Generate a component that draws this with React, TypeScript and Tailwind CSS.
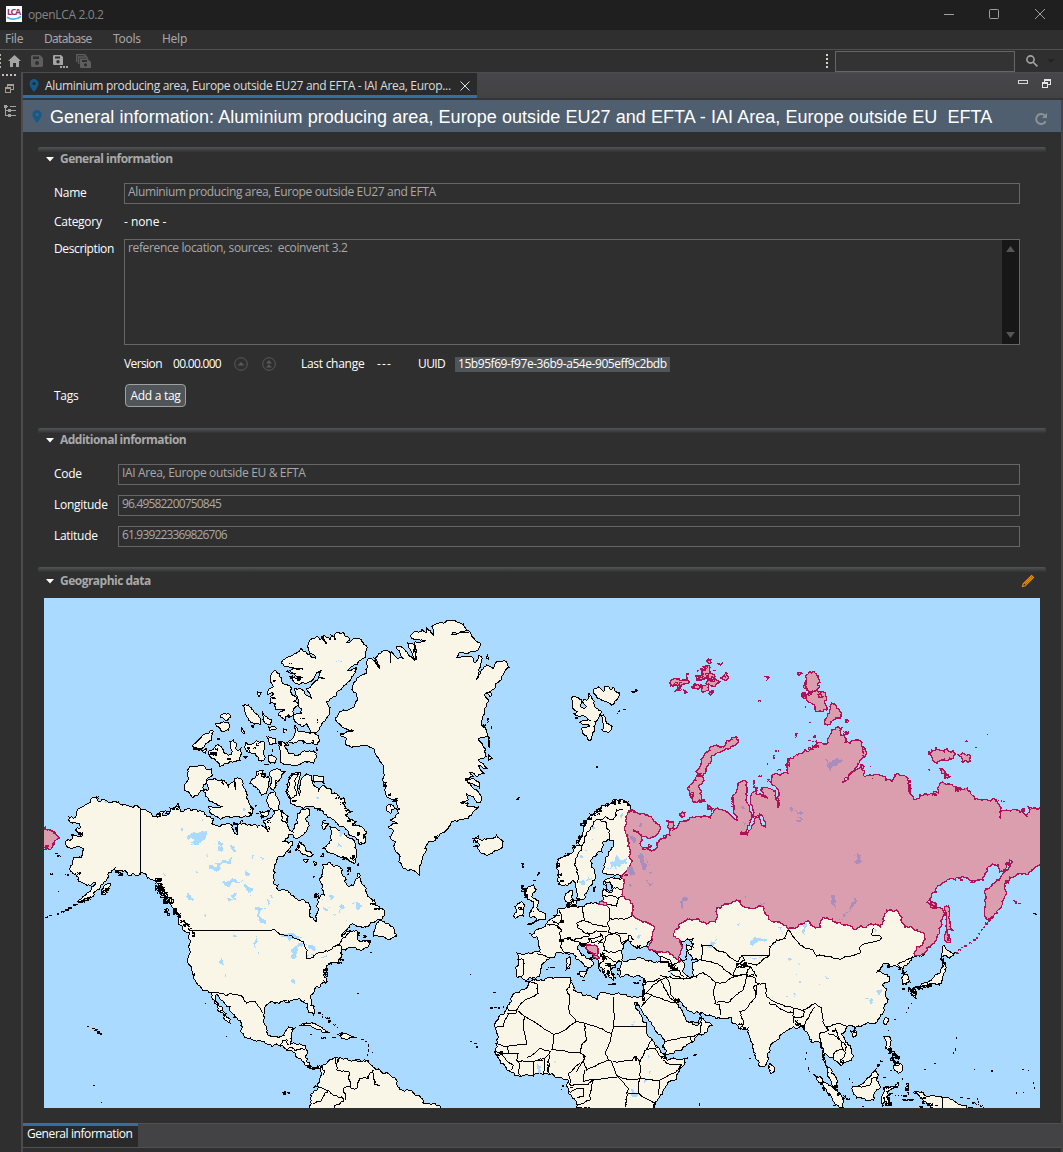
import React from "react";

type Origin = [number, number, number];

/* Coordinate frames: x offset, y offset, units per pixel. */
const PAGE: Origin = [0, 0, 1];
const NW: Origin = [40, 560, 3];
const SW: Origin = [40, 840, 3];
const GL: Origin = [330, 600, 3];
const EU: Origin = [470, 780, 3];
const NE: Origin = [660, 560, 3];
const SE: Origin = [660, 830, 3];
const AF: Origin = [470, 930, 3];

/* Stable value in [-0.5, 0.5) for a segment, so shared coastlines stay identical. */
const noise = (a: number, b: number, c = 0, d = 0) => {
  const v = Math.sin(a * 12.9898 + b * 78.233 + c * 37.719 + d * 9.131) * 43758.5453;
  return v - Math.floor(v) - 0.5;
};

/* Turns a list of points into a path, adding small coastline irregularities. */
function trace([ox, oy, k]: Origin, src: string, closed = true, rough = 0.3) {
  let p = src.trim().split(/\s+/).map((q) => {
    const [x, y] = q.split(",").map(Number);
    return [ox + x / k, oy + y / k];
  });
  if (closed) p.push(p[0]);
  for (let level = 0; level < 3; level++) {
    const out = [p[0]];
    for (let i = 1; i < p.length; i++) {
      const [x0, y0] = p[i - 1];
      const [x1, y1] = p[i];
      const len = Math.hypot(x1 - x0, y1 - y0);
      const straight = rough === 0 || (x0 === x1 && (x0 === 1040 || len > 40)) || (y0 === y1 && len > 25);
      if (len > 2 && !straight) {
        const d = noise(x0, y0, x1, y1) * Math.min(len, 8) * rough * 1.4;
        out.push([(x0 + x1) / 2 - ((y1 - y0) / len) * d, (y0 + y1) / 2 + ((x1 - x0) / len) * d]);
      }
      out.push([x1, y1]);
    }
    p = out;
  }
  return "M" + p.map(([x, y]) => x.toFixed(1) + " " + y.toFixed(1)).join("L") + (closed ? "Z" : "");
}

const many = (o: Origin, list: string[], closed = true, rough = 0.3) =>
  list.map((s) => trace(o, s, closed, rough)).join("");

/* Islets, given as x,y,width,height; larger ones are broken up into loose pixels. */
const specks = ([ox, oy, k]: Origin, src: string) =>
  src.trim().split(/\s+/).map((q) => {
    const [x, y, w, h] = q.split(",").map(Number);
    const px = Math.round(ox + x / k);
    const py = Math.round(oy + y / k);
    if (w * h <= 3) return `M${px} ${py}h${w}v${h}h-${w}z`;
    let out = "";
    for (let j = 0; j < h; j++)
      for (let i = 0; i < w; i++)
        if (noise(px + i, py + j) < 0.26) out += `M${px + i} ${py + j}h1v1h-1z`;
    return out;
  }).join("");

const AMERICA =
  "96,797 98,801 103,799 111,802 120,804 130,807 140,808 147,811 152,815 157,817 160,812 166,810 162,815 170,812 170,808 175,808 178,803 179,808 182,812 188,808 191,811 198,812 206,815 213,818 215,825 225,825 233,825 237,835 238,825 253,825 262,825 266,829 268,832 264,820 270,819 275,811 280,810 281,820 288,817 287,826 293,832 298,823 298,813 301,810 308,808 309,814 306,818 309,823 306,832 298,838 289,834 284,841 293,842 288,850 278,857 277,861 273,870 273,882 278,885 278,890 290,893 300,900 308,902 309,912 313,918 316,922 318,913 317,900 324,895 323,885 319,880 322,865 330,862 335,866 340,867 342,874 345,877 345,882 347,885 350,886 355,883 357,874 358,873 363,885 367,894 370,898 375,904 380,908 384,910 384,916 377,920 370,924 350,925 342,937 348,932 357,931 357,937 360,942 368,940 370,943 357,950 355,947 342,950 340,953 342,957 339,961 333,962 327,968 324,972 326,983 320,987 311,995 311,999 315,1010 313,1016 308,1012 307,1003 304,1001 300,999 287,1002 281,1001 273,1002 265,1007 264,1014 264,1023 268,1035 272,1037 278,1038 285,1036 285,1032 287,1029 295,1028 292,1040 290,1045 305,1045 305,1057 307,1062 312,1067 322,1067 327,1063 333,1058 337,1057 337,1063 340,1057 347,1058 357,1061 367,1060 373,1067 380,1070 390,1075 397,1085 408,1090 418,1095 426,1104 440,1106 443,1112 311,1112 311,1103 313,1093 319,1087 322,1075 320,1068 317,1068 312,1069 305,1065 298,1058 295,1053 288,1051 278,1045 267,1044 253,1040 242,1033 242,1023 238,1020 232,1013 217,994 216,997 222,1007 224,1012 230,1019 230,1023 225,1020 223,1013 217,1010 214,1000 209,992 198,985 195,980 193,973 188,963 188,947 190,940 188,932 186,932 178,922 176,911 173,908 170,898 162,890 157,883 153,880 147,876 143,873 139,875 132,874 128,875 120,870 117,873 115,868 112,870 104,882 96,891 88,899 77,902 87,893 91,888 95,882 92,884 83,883 78,877 72,872 70,866 73,862 73,858 83,855 83,848 75,848 70,848 65,842 72,839 75,835 83,835 75,830 80,828 75,822 68,820 69,817 77,815 80,808 84,806 90,801";

const OLD_WORLD =
  "630,805 626,802 623,800 618,801 613,800 610,804 605,805 600,808 595,812 590,814 587,820 586,825 582,833 580,845 570,853 563,857 557,863 557,869 559,874 557,880 563,886 568,885 573,880 576,883 578,900 582,899 585,898 587,892 589,887 593,880 596,877 591,867 591,860 593,857 598,852 602,852 603,842 608,839 613,840 613,847 608,852 605,858 603,873 610,875 617,874 621,877 607,879 603,883 607,886 612,885 612,892 608,892 603,888 602,894 603,900 598,904 592,903 583,906 570,907 567,902 567,893 572,890 570,903 565,908 560,908 557,914 553,918 547,923 544,927 538,930 529,933 532,936 538,938 540,947 540,952 517,953 517,977 525,980 531,978 537,977 542,967 550,958 556,953 562,953 570,953 576,959 587,967 587,973 589,967 593,965 585,956 580,952 578,946 580,943 585,947 592,954 598,960 600,967 603,973 606,978 608,972 613,980 610,967 618,962 622,962 620,970 620,977 630,976 643,978 645,980 642,997 633,997 627,996 613,995 610,994 600,993 598,999 597,1000 585,996 577,992 573,990 573,985 570,977 562,978 550,978 538,981 528,982 523,990 515,993 511,1002 507,1007 500,1015 495,1027 496,1040 495,1053 500,1062 507,1070 520,1077 535,1074 545,1073 552,1073 558,1078 568,1080 568,1093 577,1103 577,1112 653,1112 655,1102 665,1088 677,1077 684,1065 688,1057 676,1059 667,1060 660,1050 655,1045 647,1030 642,1017 635,1002 640,1008 652,1025 665,1043 665,1055 678,1050 690,1043 704,1034 712,1025 702,1018 700,1023 695,1025 687,1022 683,1013 678,1000 683,1004 690,1012 703,1013 712,1016 730,1017 736,1024 742,1029 748,1028 750,1038 752,1047 757,1060 762,1067 768,1060 770,1047 780,1038 790,1028 803,1025 807,1032 812,1043 820,1042 823,1057 827,1070 837,1088 837,1078 828,1067 825,1053 833,1057 842,1065 853,1057 852,1050 848,1043 843,1036 842,1033 847,1027 860,1027 877,1022 884,1011 888,1002 886,993 882,985 890,977 877,972 880,968 887,963 893,966 900,967 903,976 902,985 910,982 908,976 903,970 909,963 913,957 917,956 925,953 932,944 940,933 942,925 943,910 932,906 927,902 936,892 947,880 955,880 967,878 975,882 983,880 985,874 988,867 992,864 998,865 1000,872 1005,869 1010,860 1013,862 1008,870 1002,875 997,880 990,887 985,893 985,907 987,920 994,915 1002,905 1005,896 1005,887 1006,882 1010,877 1020,873 1027,875 1033,870 1040,865 1044,865 1044,808 1034,808 1028,807 1027,817 1023,812 1017,810 1000,812 998,803 995,799 986,799 975,799 972,795 967,788 957,787 943,782 938,787 938,793 930,794 920,795 916,800 910,793 908,778 897,773 892,782 886,780 880,775 865,777 862,765 855,771 842,783 850,775 857,767 865,757 865,750 862,742 857,740 850,743 845,742 846,738 841,735 842,728 837,727 832,730 829,737 828,743 822,743 813,748 805,750 798,755 788,760 787,767 788,773 772,775 772,785 779,793 778,807 776,797 773,790 767,787 760,790 767,798 758,795 756,791 752,793 752,805 752,817 760,814 763,817 765,827 759,817 755,818 750,830 747,835 740,833 746,832 750,820 749,805 747,790 747,783 743,780 738,783 736,793 732,800 734,809 737,820 726,812 717,808 713,813 710,818 704,816 693,817 684,821 673,830 672,822 668,820 670,835 660,839 657,843 655,850 643,848 640,835 633,830 642,836 652,837 660,830 657,824 652,818 642,813 633,810";

const RUSSIA =
  "628,812 625,820 625,827 628,840 630,852 632,860 629,868 622,875 622,895 626,900 633,905 632,915 640,920 647,923 655,928 652,936 648,947 660,952 673,955 678,960 680,955 682,945 676,938 675,930 681,923 687,919 692,920 697,919 701,922 710,922 715,922 717,908 727,904 740,901 744,907 752,909 760,906 765,913 770,920 776,921 788,929 796,928 805,922 812,925 820,927 823,917 832,919 843,925 857,929 867,926 880,927 883,918 887,910 898,911 902,918 905,927 914,930 925,935 923,943 917,947 915,956 " +
  OLD_WORLD.slice(OLD_WORLD.indexOf("925,953"));

const CANADA = many(NW, [
  "725,305 745,290 760,285 780,265 800,280 828,297 808,280 805,265 805,250 830,230 840,240 850,228 858,252 848,228 870,240 873,225 885,240 885,222 910,218 930,235 920,248 945,235 965,240 982,262 978,290 950,315 920,332 950,322 935,350 905,385 885,410 860,425 870,450 860,475 840,500 830,517 810,517 800,490 785,500 765,485 760,465 785,460 775,435 765,385 785,388 815,415 800,385 835,355 850,355 835,350 845,330 800,370 775,372 750,350 785,352 740,335 762,325 790,328 735,320",
  "705,330 720,340 735,375 755,385 750,395 770,415 760,425 778,435 760,450 755,470 745,465 735,482 715,465 735,450 705,445 705,430 690,430 690,420 700,400 682,405 685,390 700,380 690,360",
  "765,495 775,515 785,515 810,520 830,525 840,540 830,555 815,548 800,550 785,540 765,548 745,545 760,530",
  "715,545 735,550 745,580 770,587 790,575 820,572 830,590 820,610 795,605 780,615 735,612 720,605 720,570",
  "460,618 485,615 500,628 515,625 520,645 500,660 490,690 475,705 458,713 445,695 433,690 445,655 442,630",
  "525,655 545,660 550,675 545,660 565,680 580,665 585,690 585,655 600,655 610,680 620,715 640,745 635,765 600,772 590,768 540,778 510,758 505,740 550,738 510,725 495,708 490,690 505,690 500,670",
  "630,670 645,655 650,635 670,632 665,650 685,650 680,700 665,705 655,688 645,680",
  "690,635 715,628 735,635 720,658 705,672 700,690 690,680",
  "690,700 705,695 718,725 715,750 700,755 685,740 683,710",
  "745,660 755,640 780,637 778,655 772,690 778,705 785,655 800,642 815,650 820,675 835,695 850,675 870,685 875,700 890,700 900,720 915,715 915,745 935,755 915,765 925,775 950,785 940,795 965,800 980,815 970,825 978,840 960,853 945,830 925,820 900,800 875,775 850,755 825,745 790,745 750,725 740,700",
  "745,665 755,642 775,640 765,665 770,705 750,715 742,690",
  "870,800 890,805 905,815 935,835 950,870 945,910 920,895 880,880 850,865 875,840",
  "505,575 530,555 545,560 555,580 575,585 570,545 580,538 590,570 603,565 600,600 570,605 540,620 532,605 510,590",
  "458,555 490,525 518,510 515,540 495,555 480,570 460,568",
  "540,470 565,460 572,472 555,480", "527,490 565,488 565,510 550,515",
  "605,435 625,435 655,465 660,495 640,490 620,470 615,455", "668,458 695,480 690,495 675,490",
  "685,500 710,505 690,512", "602,500 612,520 605,515", "653,395 664,398 659,410 654,405",
  "618,545 628,555 648,542 672,545 672,600 655,600 645,580 620,575", "683,585 705,590 705,610 690,610",
  "680,530 705,535 708,550 690,555", "820,645 850,650 852,670 820,665", "730,505 740,510 732,518",
  "487,575 500,565 497,580", "660,755 690,750 680,770 665,775", "848,785 865,790 850,808", "720,750 745,770 740,790 725,780",
  "632,498 642,495 640,502", "612,590 620,590 616,598",
]);

const SMALL_WEST = many(SW, [
  "765,30 780,5 800,35 820,45 790,45", "790,60 805,58 798,68", "820,65 830,70 825,78", "1000,290 1005,260 1020,240 1035,250 1060,262 1070,290 1050,300 1030,290",
  "780,557 800,548 830,555 870,577 850,578 825,565", "890,582 915,580 950,592 925,597 905,595", "190,140 210,130 195,165 185,160",
  "840,50 850,40 850,50",
]) + many(GL, [
  "430,715 445,707 455,722 490,715 500,705 520,725 515,745 475,765 450,755 440,740 430,738 450,735",
  "728,290 745,293 755,298 750,315 765,325 770,320 760,298 772,300 775,280 790,300 795,320 815,335 805,355 795,365 780,422 757,395 755,385 780,378 750,368 778,360 765,350 735,345 742,335 728,320",
  "790,270 805,260 820,275 830,258 840,268 850,262 868,278 860,300 845,315 830,305 800,292",
  "810,345 820,345 830,370 847,378 835,398 815,390 822,375", "905,275 918,268 922,272 910,278", "472,163 476,178 470,175",
  "476,465 486,475 476,480", "560,598 568,592 566,600", "470,280 485,280 480,292", "168,620 180,612 195,625 180,640",
]) + many(EU, [
  "165,325 190,315 200,328 185,350 205,360 205,390 225,400 225,420 195,425 170,435 200,418 178,410 185,390 190,365 175,360 165,345",
  "135,380 155,365 165,380 160,408 135,415 130,408 140,395", "290,535 300,530 298,565 288,570 292,550", "325,582 350,575 342,592",
  "370,325 378,320 372,335", "305,365 320,360 318,372 305,372",
]);

const GREENLAND = trace(GL,
  "240,108 255,95 275,95 275,88 290,98 290,84 310,105 305,80 320,70 340,70 350,62 375,62 400,72 415,92 368,98 365,103 420,95 425,105 435,120 452,130 445,150 385,160 380,172 410,168 430,175 435,188 445,165 455,170 452,200 440,240 455,210 470,195 490,205 500,185 520,182 538,202 515,228 513,240 497,250 495,265 465,280 475,300 470,320 458,350 455,375 470,395 475,410 445,418 455,430 465,445 470,470 445,480 460,490 470,505 460,505 445,495 462,520 440,530 420,518 430,530 405,535 445,545 448,565 425,550 410,545 440,570 452,585 450,608 440,608 430,590 410,582 415,600 390,608 415,610 410,618 445,620 425,645 400,658 365,665 345,695 320,715 295,725 285,745 290,745 275,785 268,825 245,810 220,805 205,785 208,765 195,750 195,725 180,710 190,690 175,680 200,670 180,660 205,640 200,605 165,580 165,550 158,540 162,510 155,490 130,445 100,435 65,443 45,432 50,415 30,405 70,392 45,385 15,360 30,335 75,320 80,280 65,270 70,250 80,235 95,225 110,220 115,175 130,180 150,205 135,175 160,152 178,155 180,190 185,155 205,175 220,175 200,140 220,145 235,165 255,182 235,140 232,128 255,140 258,180 255,125 285,122 245,115",
  true, 0.25);

const SMALL_EAST = many(SE, [
  "850,345 862,360 885,368 868,385 850,378 843,385", "850,388 857,400 855,425 848,440 845,460 830,465 815,460 800,467 775,470 760,485 758,475 790,460 815,450 825,435 840,430 850,410",
  "755,478 768,480 768,505 758,495", "330,700 343,712 342,725 332,730 326,715", "678,560 686,568 678,585 670,578", "572,603 588,602 590,615 580,622",
  "460,733 480,740 505,765 530,780 550,810 550,832 530,825 500,785 475,755",
  "577,770 590,770 610,760 630,740 645,722 655,735 648,750 660,775 645,785 640,810 620,812 590,805 580,790",
  "672,620 690,622 690,650 700,665 680,655", "700,705 722,700 725,725 715,730 705,722",
  "670,775 700,770 715,755 715,768 695,778 680,785 690,795 680,800 690,815 680,820 672,800 668,830 664,815 670,790",
  "765,785 790,788 800,800 820,795 850,803 880,810 895,822 920,828 920,840 830,840 800,820 780,800",
]);

const BORDERS_W =
  "M140.5 808V875M190 930.5H272" +
  many(SW, [
    "695,268 715,278 750,285 775,298 795,315 802,330 800,355 820,352 830,340 850,337 880,318 890,315 905,302 930,270",
    "890,315 905,320 905,335", "505,458 525,458 560,468 600,465 620,490 640,485 655,500 668,520",
    "720,620 730,600 742,600 745,615", "740,630 755,622 765,632 795,628", "845,680 850,705", "820,742 850,745 870,755 905,770 910,785 885,795 885,804",
    "820,790 840,785 865,755", "885,650 890,690 930,700 930,740 910,745 915,780", "930,740 950,745 960,715 985,715 1000,690", "1000,700 1005,735 1020,738", "143,873 175,885",
  ], false) +
  many(NW, ["815,645 825,670", "1000,290 1020,320"], false);

const BORDERS_EU = many(EU, [
  "320,310 322,270 315,240 335,210 345,170 370,125 390,118 405,110 430,118 440,90 460,90", "390,118 410,130 418,150 420,180",
  "430,295 450,300 455,290", "430,325 455,330", "400,345 430,348 445,355", "410,375 440,380 445,355 455,350", "415,380 420,415 485,408",
  "420,415 412,430 415,455 440,458 470,460", "340,380 340,400 345,420 320,430 325,445 350,460 380,452 412,455", "345,425 380,435 412,440",
  "270,390 275,410 265,430 275,450", "245,420 265,430", "230,432 265,445 275,450 270,480 275,490 280,515", "272,480 300,475 310,482 330,475 360,465 350,455",
  "310,482 330,490 355,488 358,475 400,465", "355,475 365,488 390,485 400,475 390,460", "385,490 400,490 400,512 430,518 455,510", "400,490 415,465 445,465 455,490 475,480",
  "395,515 405,530 400,545 390,550 390,575", "405,530 430,545 450,540", "330,488 350,495", "250,405 270,405", "140,540 160,538 155,590 145,590", "240,535 200,520",
  "650,475 670,490 665,510 650,515 650,540 620,550 570,545", "570,530 600,540 605,560 625,570 640,590", "520,605 560,600 590,595 600,590 620,595 650,590", "300,525 285,515",
], false) + many(EU, ["455,495 475,465 490,480"], false, 0.4);

const BORDERS_AF = many(AF, [
  "165,155 200,160 205,190 150,225 140,240", "110,250 140,248 140,240 115,240 110,230", "75,292 100,290 105,270 115,250", "145,243 250,313 280,303 318,275 345,280 425,310",
  "425,310 430,290 430,200", "302,145 300,170 290,180 300,200 298,250 318,275", "165,262 160,280 168,345 110,350", "75,340 110,350 115,370 75,372",
  "75,365 100,365", "115,370 145,370 140,390 150,405 145,425 155,440", "100,380 120,400 130,405 125,420", "145,395 190,395 190,440", "170,385 210,355 240,365 225,385 190,395",
  "250,313 250,340 245,360 330,368 345,380 320,425", "225,385 220,432", "240,375 235,428", "345,280 350,330 335,345 330,368", "425,310 415,350 405,370 415,390 350,420 340,395 345,385",
  "415,390 425,395 445,440 370,448 340,455 345,420", "295,455 300,465 350,465 370,448", "300,465 295,430 330,400", "300,490 320,475 340,475 340,500 320,505", "370,450 360,510 320,525",
  "445,440 480,450 510,445 510,395 495,380 485,392 430,395", "445,440 475,475 465,530", "475,490 505,490 510,445", "510,445 570,450 610,430 635,405 600,405 580,390",
  "570,450 565,495", "505,490 550,520", "510,395 525,360 555,355 580,385", "430,290 530,290", "530,360 545,330", "515,230 545,195 620,220", "525,190 550,165 570,150", "545,195 525,190",
  "570,150 580,165 600,205 620,220 630,212", "585,335 660,320 690,310 695,275", "660,320 670,340", "650,275 685,280 690,260",
], false, 0.15);

const BORDERS_AS = many(SE, [
  "165,275 170,265", "385,298 375,325 350,330 330,350 330,375 290,405 265,400", "125,390 125,345 145,345 190,365 215,385 235,395 245,375 330,375",
  "105,390 135,390 170,400 200,425 230,440 245,435", "105,440 130,428 165,455 165,520 180,525 180,555", "165,460 200,455 225,435 260,430 270,410 230,400",
  "170,517 210,515 250,480 260,440 285,445 290,460", "220,440 230,400 250,405 275,415 290,440", "290,460 315,460 320,500 335,512 400,535 430,540", "285,495 290,465",
  "240,600 250,575 240,545 260,535 290,490 280,470 300,460", "330,515 330,522 370,540 400,548", "400,535 400,580", "400,560 430,560 430,540 465,520 485,535 490,580 505,600",
  "430,590 440,570 465,530", "480,610 505,600 500,590 540,580 560,590", "480,610 485,650 490,670", "505,610 530,620 545,640 550,660 525,665 520,680", "525,595 535,620 560,650 555,680 540,690",
  "385,300 420,345 460,360 470,378 540,388 600,370 600,350 660,330 665,322 635,315 640,295", "710,405 730,395 760,380", "722,432 740,425", "848,803 848,834",
  "590,770 630,765 635,745 655,745", "0,435 20,440 30,460 30,490 50,520", "35,430 65,445 100,440", "245,378 255,390 230,410", "0,395 25,395 40,420 25,425",
], false, 0.2);

const LAKES =
  many(NW, [
    "440,835 470,818 500,812 495,835 475,855 450,855 465,840", "425,798 435,805 430,818", "883,308 915,294 917,298 885,312", "530,840 550,850 545,860", "895,815 915,820 900,830", "190,724 202,726 198,731", "485,770 490,780 486,785", "570,855 585,862 575,868",
    "893,850 905,860 893,862", "608,742 618,748 610,752", "828,710 838,714 830,718",
  ], true, 0.5) +
  many(SW, [
    "450,5 480,0 475,15", "495,45 505,40 500,55", "505,85 530,80 525,68 545,65 575,52 565,72 540,80 530,95", "545,128 575,115 610,120 585,128 555,138", "615,130 640,145 632,168 620,150",
    "645,200 680,205 660,215 685,250 665,250 650,225", "575,165 590,160 585,185", "720,295 750,280 790,295 760,298", "755,358 755,325 775,308 795,310 770,322 765,358", "795,305 820,310 830,330 808,325", "800,348 830,335 825,342", "838,350 860,345 845,353",
    "645,285 650,325 642,320", "440,160 462,178 448,180", "635,50 645,45 640,60", "845,200 870,200 855,212", "900,195 915,205 900,220", "935,190 965,195 955,210", "865,165 880,165 870,180", "545,355 552,375 540,370", "555,402 562,402 556,412",
    "490,225 498,222 495,238", "580,285 598,285 590,290", "755,410 762,432 755,420", "915,235 922,240 918,245", "680,180 690,185 683,195", "370,100 380,112 376,112", "655,335 663,345 658,345", "620,90 630,100 615,105",
    "525,15 550,25 545,35", "660,50 675,52 668,60", "575,15 590,30 580,35", "560,175 585,170 575,180", "880,220 890,225 882,230", "845,175 852,180 847,185", "690,165 700,172 692,175", "470,92 474,98 469,98",
  ], true, 0.5) +
  many(EU, [
    "410,265 425,258 420,248 432,245 440,225 450,240 470,235 472,252 455,252 450,262 440,258 440,272 430,258", "325,305 340,300 345,310 335,322", "345,300 365,295 350,305", "362,170 372,178 365,175", "450,105 458,100 455,115", "490,440 500,445 495,452", "500,472 515,465 510,475",
    "330,225 340,235 332,235", "362,135 375,145 366,145", "345,205 352,215 346,213", "600,570 608,580 602,590",
  ], true, 0.5) +
  many(SE, [
    "140,355 150,335 170,328 168,340", "272,345 278,330 320,328 320,334 290,338", "230,280 243,278 236,288", "355,295 365,290 365,315", "430,285 440,280 435,315", "645,295 653,298 646,308", "495,438 508,443 498,447", "615,505 640,510 635,522", "650,482 665,478 662,500 655,495",
    "268,380 310,378 290,384", "375,498 390,492 388,500", "400,488 410,492 405,505", "385,385 395,388 388,392", "415,400 421,402 416,408", "530,665 540,672 530,672", "340,335 345,345 341,345", "335,497 345,500 337,503", "418,452 426,456 420,462", "472,460 480,462 475,466", "404,432 410,433 407,438",
  ], true, 0.5) +
  many(AF, ["482,480 508,480 505,498 485,500", "202,403 215,410 212,430", "485,280 497,272 488,290", "250,392 258,394 252,402", "535,375 540,380 535,385", "538,422 543,425 539,432", "582,172 590,180 588,190", "520,440 530,450 522,460", "500,120 505,125 500,130"], true, 0.5);

const SEAS = many(EU, [
  "460,490 475,480 485,495 500,505 520,500 535,502 560,520 572,530 570,543 540,542 515,535 490,540 470,545 455,540 455,520", "560,475 548,490 535,500 530,497 545,480", "405,305 420,305 427,330 418,335 408,325",
]) + many(SE, [
  "65,335 80,328 100,325 98,350 80,345 78,355 92,375 95,390 110,385 112,395 98,398 100,420 105,440 85,440 68,425 75,405 60,385 52,360 65,355",
]);

const RU_LAKES = many(EU, [
  "475,260 492,270 495,285 480,290", "510,220 520,235 525,270 512,250 508,235", "530,295 548,310 540,320", "630,365 655,355 640,365 638,388 630,385", "475,160 490,170 495,190 482,180", "512,130 518,128 510,142", "530,235 540,255 530,250", "478,312 488,316 480,320", "535,275 545,275 540,285",
], true, 0.5) + many(NE, [
  "498,595 505,610 545,598 535,615 515,620 512,636 500,620", "392,740 400,750 395,758", "400,752 410,752 415,758 430,756 430,760 412,762", "408,770 420,772 432,776 425,780 420,777", "408,780 425,782 410,785", "243,738 255,745 245,745", "250,785 260,792 252,795", "850,670 860,675 850,676", "915,685 922,690 916,692", "1005,755 1012,760",
], true, 0.5) + many(SE, [
  "580,75 605,75 605,95 590,102 582,95 595,85", "583,205 580,230 550,265 535,268 560,250", "513,195 525,200 530,240 522,225", "300,218 315,220 303,230", "255,198 262,202 256,204", "770,350 778,352 772,356",
], true, 0.5);

const RU_ISLANDS = trace(PAGE, "40,826 47,830 52,831 55,833 60,838 56,840 54,842 52,848 50,850 40,847") +
  many(NE, [
    "215,532 228,530 236,540 232,550 200,565 170,580 145,610 138,630 130,645 115,680 120,700 125,710 137,725 115,722 110,728 88,705 85,690 100,665 108,635 120,620 125,595 150,570 170,555 195,555",
    "440,345 462,335 470,345 480,360 475,385 455,395 430,382 438,365", "445,400 465,390 490,395 500,415 495,430 500,450 485,455 465,445 455,430 440,420", "480,400 490,410 475,412",
    "515,430 525,432 530,445 545,460 540,475 520,480 495,492 502,465 510,450", "425,400 440,405 435,415 422,410",
    "815,570 830,560 840,572 860,565 870,575 885,580 880,595 860,602 845,600 825,608 815,590", "893,583 930,595 932,605 905,605", "840,625 850,628 855,635 870,650 855,655 845,640",
    "30,370 50,358 65,362 80,352 88,365 70,372 60,385 48,392 52,378", "105,350 125,345 135,330 130,320 150,322 148,340 165,350 150,360 125,360", "140,365 165,355 180,365 165,380 150,375", "180,355 195,350 198,338 206,350 195,362", "120,380 145,375 145,390 125,392", "95,380 115,375 115,388",
    "140,302 152,300 148,310", "172,310 190,308 182,316", "318,350 330,352 322,358", "412,338 428,340 418,346", "58,762 68,755 75,765 65,772", "18,780 40,785 40,800 28,810 22,800", "143,735 160,745 155,752", "600,615 612,620 605,628", "70,390 82,398 75,402", "148,395 160,392 152,405",
    "555,478 566,484 558,486",
  ], true, 0.5) +
  many(SE, ["853,232 866,228 868,255 870,280 880,303 864,298 866,318 872,335 860,336 858,290", "1060,212 1068,215 1070,222", "812,215 830,220 825,235 812,232"]) +
  many(EU, ["385,372 390,365 398,362 400,367 410,368 410,377", "350,495 380,498 384,512 382,525 388,535 380,538 368,520 352,512"]);

const RU_SPECKS = specks(PAGE, "44,826,2,4 46,829,5,2 53,832,3,2 44,845,5,5 52,842,3,3") +
  specks(NE, "295,420,3,2 435,437,1,2 447,482,2,2 404,520,3,2 404,525,2,3 460,525,3,3 445,540,3,1 456,543,4,1 467,540,1,3 345,570,4,2 340,585,2,4 322,610,1,2 350,627,4,2 293,645,4,2 630,617,1,1 915,540,3,2 945,560,2,1 982,523,1,1 803,573,2,4 803,627,2,2 1015,720,1,1 1022,720,1,2 1030,724,2,1 78,340,3,2 110,330,2,2 160,330,3,1 120,325,3,4 135,315,3,4 108,345,6,6 125,340,7,5 150,355,5,4 40,365,9,4 50,375,5,6 320,657,3,3 280,660,2,8 285,680,3,5 300,705,5,2 240,817,6,3 375,610,4,4 445,560,6,3 455,555,7,3 885,680,6,5 815,700,5,3 635,655,1,1 1082,745,4,4 1017,755,2,7 350,720,2,8 212,710,3,10 90,695,4,5 118,718,6,3 110,640,5,4 382,595,3,9 548,512,6,4 425,395,4,5 445,395,4,4 435,360,2,8 605,560,2,10 745,660,3,12") +
  specks(SE, "888,365,3,2 895,358,3,2 904,352,2,2 912,345,3,2 925,337,4,2 938,328,3,2 947,320,2,2 955,308,2,2 962,296,2,2 968,287,2,2 974,276,3,3 985,266,3,3 992,258,3,3 1075,220,3,1 1035,150,4,4 930,150,6,3 815,225,5,4 850,240,3,6 860,310,3,8 1040,95,3,4 900,147,3,2") +
  specks(EU, "475,90,7,3 455,282,6,2 515,200,7,3 535,192,4,4 580,165,4,4 490,150,3,2 625,540,3,3 370,520,5,3");

const SPECKS =
  specks(SW, "45,40,3,1 52,45,4,2 30,98,3,2 53,152,1,1 0,228,9,2 28,224,4,1 50,219,2,2 60,214,5,2 72,208,5,2 85,200,4,2 98,192,5,2 112,184,8,2 130,178,6,2 140,170,4,3 186,150,6,3 195,143,5,3 182,160,3,2 142,557,2,1 155,563,3,1 163,567,4,2 172,573,4,3 180,580,2,2 160,736,2,1 183,785,1,1 495,490,1,1 558,587,1,1 725,752,4,4 740,757,3,2 952,460,2,1 822,160,5,5 820,108,2,2 345,115,7,4 345,128,8,8 352,140,8,7 360,155,8,6 370,170,9,6 368,182,5,3 388,178,5,5 372,205,5,5 380,218,4,3 400,205,4,7 412,220,4,5 420,240,6,3 430,248,7,4 445,265,4,3 455,270,3,7 225,90,6,3 235,100,5,3 110,95,4,3 75,102,4,2 835,515,3,2 845,522,1,4 855,530,5,2 865,540,3,3 880,552,3,2 892,560,1,1 842,592,5,2 810,582,2,1 875,588,4,2 900,580,3,3 960,598,4,1 975,603,2,1 983,612,1,3 983,628,1,3 980,642,1,2 997,637,1,1 945,657,6,1 968,660,6,2 860,370,6,2 850,385,5,9 848,420,4,3 890,365,5,2 900,358,4,2 990,335,2,1 950,275,3,4 970,285,4,3 960,262,6,1 985,300,3,3 735,480,5,3 485,450,3,1 800,675,4,3 815,682,3,3 830,675,6,3 895,650,2,4") +
  specks(SW, "460,400,2,4 540,510,3,1 550,520,3,3 990,190,6,2 1000,205,7,2 995,178,4,3 905,50,6,3 935,45,3,6 920,98,3,2 960,5,2,3 780,5,4,3 770,15,3,4 740,30,4,3") +
  specks(NW, "530,533,3,2 697,566,1,3 672,612,3,1 680,612,2,1 828,562,2,4 648,760,3,1 630,740,4,3 625,755,5,3 580,785,5,3 585,800,3,5 600,780,3,3 660,765,4,2 680,780,4,3 685,795,2,5 350,760,6,4 375,752,5,3 395,743,5,2 412,738,3,4 115,815,5,3 92,822,3,2 168,707,3,3 715,545,4,4 735,545,4,4 620,560,3,5 635,560,4,2 645,550,4,3 655,640,5,2 670,638,3,5 510,575,5,3 525,565,3,3 460,560,4,3 475,565,4,3 520,575,4,4 560,595,4,2 645,735,2,2 705,660,2,6 735,465,1,5 745,462,2,4 755,720,5,2 830,745,4,3 850,780,3,1 885,710,5,2 900,725,4,3 915,750,5,2 920,780,4,2 935,790,4,3 950,815,3,4 968,828,3,3 770,355,4,3 755,345,3,3 745,310,4,1 750,340,6,1 700,360,3,2 695,410,4,2 780,475,5,1 830,475,1,5 790,540,2,4 815,540,2,4") +
  specks(GL, "470,355,2,5 484,378,1,3 473,410,2,11 865,330,2,2 875,328,4,1 862,340,1,1 797,497,2,2 573,790,3,1 577,793,2,4 625,813,2,4 620,822,1,2 160,545,4,5 175,580,3,3 195,595,3,3 185,600,4,2 178,615,3,2 198,625,4,2 312,705,4,4 430,713,5,5 435,735,4,2 20,393,4,1 30,400,3,2 455,373,4,3 405,538,3,2 395,605,6,1 250,145,2,5 728,335,3,3 735,350,3,2 50,800,4,5 80,790,2,3 60,770,5,2") +
  specks(EU, "330,128,5,3 340,120,4,4 350,110,5,3 360,100,6,3 372,92,6,4 380,85,5,4 405,70,4,4 425,62,4,3 432,57,2,6 445,57,3,5 460,63,6,2 470,70,3,3 318,180,3,4 325,165,4,4 305,195,3,4 285,220,4,3 262,250,3,5 262,280,5,3 270,300,4,2 153,315,3,6 160,325,4,4 152,327,4,3 163,340,4,5 190,300,3,1 205,280,1,2 152,250,2,1 157,246,1,6 228,568,2,1 235,560,4,1 245,562,3,1 145,380,5,3 180,390,4,2 290,365,4,6 300,358,4,4 305,372,5,3 320,355,3,3 405,550,3,3 415,548,3,4 420,560,4,3 432,555,2,3 440,565,3,3 410,570,3,6 425,580,3,3 440,580,2,2 400,560,2,7 415,608,8,2 430,590,4,2 490,605,6,2 505,600,4,1 518,598,3,6 335,600,3,1 270,420,4,3 250,425,3,1 330,490,6,3 350,515,4,2 360,530,3,3 320,580,3,2 500,495,4,3 595,550,4,4 605,560,6,4 268,477,5,3 290,470,4,3 305,475,4,2 370,322,2,5 390,518,5,4 395,530,5,3 288,562,3,2 0,583,1,1") +
  specks(AF, "70,185,3,1 60,230,4,2 72,230,3,1 83,232,2,2 95,228,2,2 0,333,2,2 12,340,3,1 18,347,2,2 275,465,2,2 272,478,1,1 688,520,1,2 670,373,4,1 580,370,3,6 572,378,4,3 75,365,8,1 78,372,7,2 320,530,13,2 515,180,3,13 497,215,2,4 690,250,2,6 615,205,5,3 530,355,6,1 575,345,2,3 555,345,2,3 465,505,2,7 300,470,5,1 340,375,3,3 200,390,6,1 230,390,2,12 495,378,2,5 548,515,3,5") +
  specks(SE, "30,405,6,4 35,415,5,2 268,685,2,1 100,672,4,2 437,665,1,2 435,685,1,2 443,710,1,3 448,722,1,1 480,755,3,3 485,770,2,2 490,775,2,3 505,790,2,3 515,765,6,3 525,770,3,4 530,785,3,4 545,795,4,5 555,805,5,2 568,745,1,2 575,757,1,1 520,825,3,1 605,828,2,1 540,690,4,3 685,600,1,1 675,650,2,3 685,655,4,6 695,670,5,7 690,680,5,4 705,675,5,5 700,692,6,5 712,700,3,3 660,690,3,2 650,702,3,3 645,712,2,3 690,720,2,1 670,740,3,1 737,545,1,1 745,530,1,2 752,518,1,1 702,567,2,1 725,475,3,2 745,470,3,5 755,482,5,5 770,470,6,3 785,465,7,3 800,460,5,4 750,490,3,3 763,492,3,2 840,385,4,3 845,395,4,4 850,375,2,2 835,460,3,1 880,665,1,2 886,655,1,3 889,622,1,2 793,716,2,1 823,700,2,1 942,718,1,1 993,720,2,2 1085,718,2,1 1105,720,1,1 1068,785,1,2 1090,787,1,1 1120,755,1,2 1122,770,1,2 1118,248,3,1 1125,252,2,2 118,822,1,2 670,772,9,2 700,770,5,1 738,760,3,4 735,772,4,4 740,785,2,3 725,745,1,2 685,790,6,2 705,795,7,1 730,795,4,2 725,808,5,2 740,806,7,2 760,785,4,2 780,800,6,2 785,812,3,3 680,800,3,8 675,820,6,3 690,815,2,4 800,820,6,3 775,828,5,2 825,825,3,1 900,800,3,1 920,805,3,1 935,815,4,2 945,822,4,1 925,830,5,2 950,805,1,2 955,812,1,2 960,825,3,2 970,830,1,1 405,570,3,6 410,580,4,3 430,585,2,5 250,590,3,3 235,580,4,2 240,400,7,4 250,395,5,2 230,408,8,2 255,432,9,2 580,595,3,5 485,665,1,8 680,400,3,5 715,410,3,3 728,460,4,2 515,600,3,3 700,662,3,2");

function WorldMap() {
  return (
    <svg viewBox="44 598 996 510" className="block h-[510px] w-[996px]" shapeRendering="crispEdges">
      <rect x="44" y="598" width="996" height="510" fill="#aadaff" />
      <g fill="#f9f5e7" stroke="#000" strokeWidth="1">
        <path d={trace(PAGE, AMERICA, true, 0.42)} />
        <path d={CANADA} />
        <path d={SMALL_WEST} />
        <path d={GREENLAND} />
        <path d={trace(PAGE, OLD_WORLD, true, 0.38)} />
        <path d={SMALL_EAST} />
      </g>
      <path d={LAKES} fill="#aadaff" />
      <path d={SEAS} fill="#aadaff" stroke="#000" strokeWidth="1" />
      <path d={BORDERS_W + BORDERS_EU + BORDERS_AF + BORDERS_AS} fill="none" stroke="#000" strokeWidth="1" />
      <path d={SPECKS} fill="#000" />
      <g fill="#db9eae" stroke="#b01054" strokeWidth="1.3">
        <path d={trace(PAGE, RUSSIA, true, 0.38)} />
        <path d={RU_ISLANDS} />
      </g>
      <path d={RU_LAKES} fill="#ab8dbd" />
      <path d={RU_SPECKS} fill="#b01054" />
    </svg>
  );
}

function Pin({ className }: { className: string }) {
  return (
    <svg viewBox="0 0 10 14" className={className}>
      <path d="M5 0a4.9 4.9 0 0 0-4.9 4.9C.1 8.5 5 14 5 14s4.9-5.5 4.9-9.1A4.9 4.9 0 0 0 5 0Zm0 6.7a1.8 1.8 0 1 1 0-3.6 1.8 1.8 0 0 1 0 3.6Z" fill="#145a88" />
    </svg>
  );
}

function Restore({ className }: { className: string }) {
  return (
    <svg viewBox="0 0 9 9" className={className} shapeRendering="crispEdges" fill="none" stroke="currentColor">
      <path d="M2.5 4V1.5H8.5V5.5H6M.5 4.5H5.5V8.5H.5Z" />
      <path d="M0 4H6M2 1H9" strokeWidth="2" />
    </svg>
  );
}

function Section({ title, gap, shift, action, children }: { title: string; gap: string; shift: string; action?: React.ReactNode; children: React.ReactNode }) {
  return (
    <section className={gap}>
      <div className="ml-[15px] h-[5px] w-[1008px] rounded-t-[2px] bg-linear-to-b from-[#515556] to-[#323232]" />
      <div className="flex h-[17px] items-center">
        <svg viewBox="0 0 8 5" className={"ml-[23px] h-[5px] w-2 " + shift}><path d="M0 0H8L4 4.5Z" fill="#fff" /></svg>
        <h2 className={"ml-[6px] text-[12px] font-bold leading-[16px] text-[#a9a9a9] tracking-[-0.52px] " + shift}>{title}</h2>
        {action}
      </div>
      {children}
    </section>
  );
}

function Field({ label, value, top, face }: { label: string; value: string; top: string; face: string }) {
  return (
    <div className={"flex h-[21px] " + top}>
      <span className="ml-[31px] w-[64px] leading-[20px]">{label}</span>
      <div className={"h-[21px] w-[902px] border border-[#666] pl-[3px] leading-[16px] text-[#a9a9a9] " + face}>{value}</div>
    </div>
  );
}

export default function App() {
  return (
    <div className="flex h-[1152px] w-[1063px] flex-col overflow-hidden bg-[#2f2f2f] font-['Open_Sans','Noto_Sans',sans-serif] text-[12px] tracking-[-0.28px] text-white whitespace-pre">
      <header className="flex h-[30px] shrink-0 items-center bg-[#1f1f1f]">
        <svg viewBox="0 0 16 16" className="-mt-[2px] ml-[6px] h-4 w-4">
          <rect width="16" height="16" fill="#fff" />
          <text x="8" y="8.7" textAnchor="middle" fontSize="9" fontWeight="bold" fontFamily="Noto Sans, sans-serif" fill="#9b2f73" textLength="14">LCA</text>
          <path d="M1 11.2Q8 15.5 15 10.5" fill="none" stroke="#4cb3e8" strokeWidth="1.8" />
        </svg>
        <span className="ml-[6px] text-[12px] tracking-[-0.35px] text-[#858585]">openLCA 2.0.2</span>
        <div className="-mt-[2px] ml-auto mr-[18px] flex items-center text-[#a0a0a0]">
          <svg viewBox="0 0 10 10" className="h-[10px] w-[10px]" stroke="currentColor"><path d="M0 5.5H10" /></svg>
          <svg viewBox="0 0 10 10" className="ml-[35px] h-[10px] w-[10px]" stroke="currentColor" fill="none"><rect x=".5" y=".5" width="9" height="9" rx="1" /></svg>
          <svg viewBox="0 0 10 10" className="ml-[36px] h-[10px] w-[10px]" stroke="currentColor"><path d="M0 0L10 10M10 0L0 10" /></svg>
        </div>
      </header>
      <nav className="flex h-[20px] shrink-0 border-b border-[#515151] font-['Noto_Sans'] leading-[18px] text-[#a6a6a6]">
        <span className="ml-[5px] w-[39px] tracking-[-0.25px]">File</span><span className="w-[69px] tracking-[-0.7px]">Database</span><span className="w-[49px] tracking-[-0.3px]">Tools</span><span>Help</span>
      </nav>
      <div className="flex h-[22px] shrink-0 items-center">
        <svg viewBox="0 0 1 14" className="h-[14px] w-px" shapeRendering="crispEdges"><path d="M.5 0V14" stroke="#bdb9ae" strokeDasharray="2 2" /></svg>
        <svg viewBox="0 0 13 12" className="ml-[7px] h-3 w-[13px]" fill="#a5a5a5"><path d="M6.5 0 13 6H11V12H8V8H5V12H2V6H0Z" /></svg>
        <svg viewBox="0 0 12 12" className="ml-[10px] h-3 w-3" fill="#5e5e5e"><path fillRule="evenodd" d="M1.5 0H9L12 3V10.5A1.5 1.5 0 0 1 10.5 12H1.5A1.5 1.5 0 0 1 0 10.5V1.5A1.5 1.5 0 0 1 1.5 0ZM2 1.5V4H8V1.5ZM6 6A2 2 0 1 0 6 10A2 2 0 1 0 6 6Z" /></svg>
        <svg viewBox="0 0 15 13" className="ml-[10px] h-[13px] w-[15px]" fill="#a5a5a5"><path fillRule="evenodd" d="M1 0H8L10 2V10H1A1 1 0 0 1 0 9V1A1 1 0 0 1 1 0ZM2 1.5V3.5H7V1.5ZM5 5A1.6 1.6 0 1 0 5 8.4A1.6 1.6 0 1 0 5 5Z" /><path d="M7 11H9V13H7ZM10 11H12V13H10ZM13 11H15V13H13Z" /></svg>
        <svg viewBox="0 0 15 14" className="ml-[8px] h-[14px] w-[15px]" fill="none" stroke="#5e5e5e"><path d="M.7 8V.7H8.5L10 2M2.7 10V3H10.5L12 4.5" strokeWidth="1.3" /><path fill="#5e5e5e" stroke="none" fillRule="evenodd" d="M4 4.5H11L15 8V14H5A1 1 0 0 1 4 13ZM6 6V8H11V6ZM9.5 9.2A1.6 1.6 0 1 0 9.5 12.4A1.6 1.6 0 1 0 9.5 9.2Z" /></svg>
        <svg viewBox="0 0 2 14" className="ml-auto h-[14px] w-[2px]" shapeRendering="crispEdges"><path d="M1 0V14" strokeWidth="2" stroke="#d8d4c8" strokeDasharray="2 2" /></svg>
        <div className="ml-[7px] h-[21px] w-[180px] border border-[#666] bg-[#333]" />
        <svg viewBox="0 0 12 12" className="ml-[11px] h-3 w-3" fill="none" stroke="#a5a5a5" strokeWidth="1.6"><circle cx="4.5" cy="4.5" r="3.6" /><path d="M7.2 7.2 11.4 11.4" /></svg>
        <svg viewBox="0 0 8 4" className="ml-[9px] mr-[8px] h-1 w-2"><path d="M0 0H8L4 4Z" fill="#242424" /></svg>
      </div>

      <div className="flex min-h-0 flex-1">
        <aside className="w-[21px] shrink-0">
          <svg viewBox="0 0 14 2" className="ml-[2px] mt-[2px] h-[2px] w-[14px]" shapeRendering="crispEdges"><path d="M0 1H14" strokeWidth="2" stroke="#c5c0b4" strokeDasharray="2 2" /></svg>
          <Restore className="ml-[5px] mt-[8px] h-[9px] w-[9px] text-[#a59d93]" />
          <svg viewBox="0 0 12 12" className="ml-[4px] mt-[12px] h-3 w-3" shapeRendering="crispEdges" fill="none" stroke="#a2a2a2"><path d="M0 1.5H4M1.5 1V10.5H4M1.5 5.5H4M6 1.5H12M7 5.5H12M7 10.5H12" /><path d="M4 5.5H7M4 10.5H7" strokeWidth="3" /><path d="M0 1.5H3" strokeWidth="3" /></svg>
        </aside>
        <div className="flex w-[1042px] flex-col border-l-2 border-t border-[#4b4b50] bg-[#2f2f2f]">
          <div className="flex h-[25px] shrink-0 justify-between bg-linear-to-b from-[#47474b] to-[#424245]">
            <div className="flex h-[25px] w-[454px] items-center border-b-[3px] border-[#316fa5] bg-[#2a2a2a]">
              <Pin className="ml-[6px] mt-[3px] h-[13px] w-[10px]" />
              <span className="ml-[6px] mt-[3px] w-[409px] text-[12px] tracking-[-0.32px] text-[#dcdcdc]">Aluminium producing area, Europe outside EU27 and EFTA - IAI Area, Europ...</span>
              <svg viewBox="0 0 10 10" className="ml-[6px] mt-[4px] h-[10px] w-[10px]" stroke="#e0e0e0"><path d="M.5.5 9.5 9.5M9.5.5.5 9.5" /></svg>
            </div>
            <div className="mr-[12px] flex pt-[6px] text-[#e6e6e6]">
              <div className="mr-[14px] mt-px h-1 w-[10px] border border-[#d5d5d5]" />
              <Restore className="h-[9px] w-[9px]" />
            </div>
          </div>
          <div className="h-[2px] shrink-0 bg-[#353537]" />
          <div className="flex min-h-0 flex-1 flex-col border-r-2 border-[#434348]">
            <div className="flex h-[32px] shrink-0 items-center bg-[#4f5f6f]">
              <Pin className="ml-[9px] h-[13px] w-[10px]" />
              <h1 className="ml-[8px] mt-[2px] w-[944px] font-['Liberation_Sans'] text-[18px] tracking-[0.05px]">{"General information: Aluminium producing area, Europe outside EU27 and EFTA - IAI Area, Europe outside EU  EFTA"}</h1>
              <svg viewBox="0 0 14 14" className="ml-[40px] mt-[6px] h-[14px] w-[14px]" fill="none" stroke="#8d9296" strokeWidth="2"><path d="M11.6 9.3A5 5 0 1 1 10.7 3.5" /><path d="M13 .8V6H8Z" fill="#8d9296" stroke="none" /></svg>
            </div>
            <div className="h-[991px] shrink-0">
              <Section title="General information" gap="pt-[15px]" shift="-mt-[3px]">
                <div className="mt-[14px] flex h-[21px]">
                  <span className="ml-[31px] w-[70px] leading-[20px]">Name</span>
                  <div className="h-[21px] w-[896px] border border-[#666] pl-[3px] leading-[16px] tracking-[-0.36px] text-[#a9a9a9]">Aluminium producing area, Europe outside EU27 and EFTA</div>
                </div>
                <div className="mt-[9px] flex h-[18px] leading-[18px]"><span className="ml-[31px] w-[70px]">Category</span><span className="tracking-[-0.05px]">- none -</span></div>
                <div className="mt-[8px] flex h-[106px]">
                  <span className="ml-[31px] w-[70px] leading-[20px] tracking-[-0.38px]">Description</span>
                  <div className="flex w-[896px] justify-between border border-[#666]">
                    <span className="pl-[3px] leading-[16px] tracking-[-0.36px] text-[#a9a9a9]">{"reference location, sources:  ecoinvent 3.2"}</span>
                    <div className="flex w-[17px] flex-col items-center justify-between bg-[#171717] py-[6px]">
                      <svg viewBox="0 0 9 6" className="h-[6px] w-[9px]"><path d="M0 6H9L4.5 0Z" fill="#555" /></svg>
                      <svg viewBox="0 0 9 6" className="h-[6px] w-[9px]"><path d="M0 0H9L4.5 6Z" fill="#555" /></svg>
                    </div>
                  </div>
                </div>
                <div className="mt-[10px] flex h-[18px] items-center leading-[18px]">
                  <span className="ml-[101px] w-[49px] tracking-[-0.6px]">Version</span><span className="w-[61px] tracking-[-0.7px]">00.00.000</span>
                  <svg viewBox="0 0 14 14" className="h-[14px] w-[14px]" fill="none" stroke="#5a5a5a"><circle cx="7" cy="7" r="6.3" /><path d="M3.5 8.5H10.5L7 5Z" fill="#5a5a5a" stroke="none" /></svg>
                  <svg viewBox="0 0 14 14" className="ml-[14px] h-[14px] w-[14px]" fill="none" stroke="#5a5a5a"><circle cx="7" cy="7" r="6.3" /><path d="M4 6.5H10L7 3ZM4 10.5H10L7 7.3Z" fill="#5a5a5a" stroke="none" /></svg>
                  <span className="ml-[25px] w-[76px]">Last change</span><span className="w-[41px] tracking-[1.2px]">---</span><span className="w-[37px] tracking-[-0.6px]">UUID</span>
                  <span className="h-[15px] w-[215px] bg-[#4f5559] pl-[3px] leading-[14px] tracking-[-0.44px]">15b95f69-f97e-36b9-a54e-905eff9c2bdb</span>
                </div>
                <div className="mt-[11px] flex h-[23px] items-center"><span className="ml-[31px] w-[71px]">Tags</span><button className="h-[23px] w-[61px] rounded-[4px] border border-[#a0a0a0] bg-[#4f5559] leading-[20px]">Add a tag</button></div>
              </Section>
              <Section title="Additional information" gap="pt-[21px]" shift="-mt-[3px]">
                <Field label="Code" value="IAI Area, Europe outside EU &amp; EFTA" top="mt-[14px]" face="tracking-[-0.34px]" />
                <Field label="Longitude" value="96.49582200750845" top="mt-[10px]" face="tracking-[-0.82px]" />
                <Field label="Latitude" value="61.939223369826706" top="mt-[10px]" face="tracking-[-0.84px]" />
              </Section>
              <Section title="Geographic data" gap="pt-[20px]" shift="mt-px" action={
                <svg viewBox="0 0 14 14" className="ml-auto mr-[26px] h-[14px] w-[14px]" fill="none" stroke="#e8941a" strokeWidth="1.1"><path d="M1.5 12.5 2.2 9.8 10.6 1.5 12.5 3.4 4.2 11.8ZM3.8 10.2 10.7 3.3" /></svg>
              }>
                <div className="ml-[21px] mt-[9px]"><WorldMap /></div>
              </Section>
            </div>
            <div className="flex h-[25px] shrink-0 border-y border-[#505055] bg-[#434346]">
              <div className="-mt-px h-[24px] w-[115px] border-t-[3px] border-[#316fa5] bg-[#292929] pl-[4px] leading-[16px] tracking-[-0.42px]">General information</div>
            </div>
          </div>
        </div>
      </div>
    </div>
  );
}
